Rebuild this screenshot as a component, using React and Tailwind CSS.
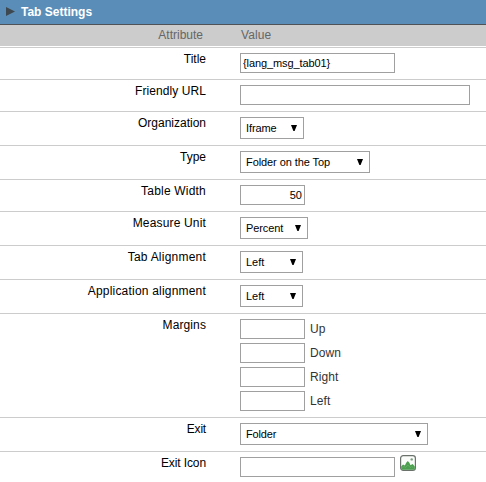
function Row({ label, labelClass = '', height, children }) {
  return (
    <div className={`flex shrink-0 border-b border-[#cccccc] ${height}`}>
      <div className="w-[206px] shrink-0 pt-1 text-right text-[12px] leading-[15px] whitespace-nowrap text-black">
        <span className={labelClass}>{label}</span>
      </div>
      <div className="ml-[34px] flex flex-col gap-1 pt-[5px]">{children}</div>
    </div>
  );
}

function Field({ value = '', width, align = '' }) {
  return (
    <input
      type="text"
      defaultValue={value}
      className={`block h-5 shrink-0 border border-[#a0a0a0] bg-white px-0.5 text-[11px] text-black outline-none ${width} ${align}`}
    />
  );
}

function Select({ value, width, textClass = '' }) {
  return (
    <button
      type="button"
      className={`flex h-[22px] items-center justify-between border border-[#a0a0a0] bg-white pr-[6px] pl-[5px] text-[11px] leading-[20px] text-black ${width}`}
    >
      <span className={textClass}>{value}</span>
      <svg viewBox="0 0 6 6" className="mb-px h-[6px] w-[6px]">
        <path d="M0 0H6L3.6 6H2.4Z" fill="#000" />
      </svg>
    </button>
  );
}

function ImageIcon() {
  return (
    <svg viewBox="0 0 16 16" className="-mt-0.5 h-4 w-4">
      <rect x="0.6" y="0.6" width="14.8" height="14.8" rx="2.6" fill="#fbfdfb" stroke="#6b726c" strokeWidth="1.2" />
      <path d="M1.2 11.5L3 9.4L4.8 10.6L6.4 7.6L7.8 5.9L9.4 7.8L10.5 10.2L12.6 9.1L14.8 11.5V13.5Q14.8 14.8 13.5 14.8H2.5Q1.2 14.8 1.2 13.5Z" fill="#4b9f4e" />
      <path d="M2.5 12.5l1.5-1 1.5 1 2.3-2.5 2.4 2.5 1.5-1 1.5 1" fill="none" stroke="#79ba78" strokeWidth="0.5" />
      <circle cx="11.7" cy="4.4" r="1.2" fill="#7c9c80" />
    </svg>
  );
}

export default function App() {
  return (
    <div className="flex h-[482px] w-[486px] flex-col overflow-hidden bg-white font-['Liberation_Sans',Arial,sans-serif]">
      <header className="flex h-[25px] shrink-0 items-center border-b border-[#4f5358] bg-[#5a8eb8] pl-[6px]">
        <svg viewBox="0 0 9 9" className="mb-px h-[9px] w-[9px]">
          <path d="M0 0L9 4.5L0 9Z" fill="#3d4851" />
        </svg>
        <h1 className="ml-[6px] text-[12px] leading-[24px] font-bold text-white">Tab Settings</h1>
      </header>
      <div className="flex h-[21px] shrink-0 bg-[#cccccc] text-[12px] leading-[21px] text-[#666666]">
        <div className="w-[203px] text-right">Attribute</div>
        <div className="ml-[38px] tracking-[0.1px]">Value</div>
      </div>
      <div className="h-[2px] shrink-0 border-b border-[#cccccc]" />
      <Row label="Title" height="h-[32px]">
        <Field value="{lang_msg_tab01}" width="w-[155px]" align="tracking-[-0.1px]" />
      </Row>
      <Row label="Friendly URL" labelClass="tracking-[0.08px]" height="h-[32px]">
        <Field width="w-[230px]" />
      </Row>
      <Row label="Organization" height="h-[34px]">
        <Select value="Iframe" width="w-[64px]" textClass="tracking-[-0.1px]" />
      </Row>
      <Row label="Type" height="h-[34px]">
        <Select value="Folder on the Top" width="w-[130px]" textClass="tracking-[-0.08px]" />
      </Row>
      <Row label="Table Width" labelClass="tracking-[0.2px]" height="h-[32px]">
        <Field value="50" width="w-[65px]" align="text-right" />
      </Row>
      <Row label="Measure Unit" labelClass="tracking-[0.16px]" height="h-[34px]">
        <Select value="Percent" width="w-[68px]" textClass="tracking-[-0.12px]" />
      </Row>
      <Row label="Tab Alignment" labelClass="tracking-[0.22px]" height="h-[34px]">
        <Select value="Left" width="w-[63px]" />
      </Row>
      <Row label="Application alignment" labelClass="tracking-[0.2px]" height="h-[34px]">
        <Select value="Left" width="w-[63px]" />
      </Row>
      <Row label="Margins" labelClass="tracking-[0.1px]" height="h-[104px]">
        {['Up', 'Down', 'Right', 'Left'].map((side) => (
          <label key={side} className="flex items-center text-[12px] leading-[20px] text-[#333333]">
            <Field width="w-[65px]" />
            <span className="ml-[5px] tracking-[0.1px]">{side}</span>
          </label>
        ))}
      </Row>
      <Row label="Exit" labelClass="tracking-[-0.2px]" height="h-[34px]">
        <Select value="Folder" width="w-[188px]" textClass="tracking-[-0.15px]" />
      </Row>
      <div className="-mb-px">
        <Row label="Exit Icon" labelClass="tracking-[-0.1px]" height="h-[34px]">
          <div className="flex items-start gap-[5px]">
            <Field width="w-[155px]" />
            <ImageIcon />
          </div>
        </Row>
      </div>
    </div>
  );
}
